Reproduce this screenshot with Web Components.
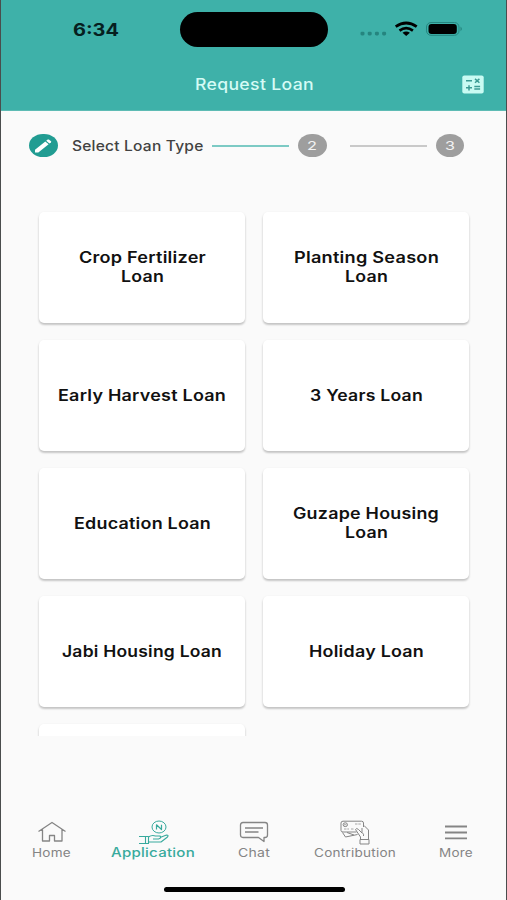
<!DOCTYPE html>
<html lang="en">
<head>
<meta charset="utf-8">
<title>Request Loan</title>
<style>
  html, body { margin: 0; height: 100%; }
  body {
    background: #fafafa;
    font-family: Inter, "Liberation Sans", sans-serif;
    overflow: hidden;
  }
</style>
</head>
<body>
<loan-app></loan-app>

<script>
// Text stretched horizontally to a given width
class WideText extends HTMLElement {
  constructor() {
    super();
    this.attachShadow({ mode: 'open' });
    this.shadowRoot.innerHTML = `
      <style>
        :host { display: block; white-space: nowrap; }
        span { display: inline-block; transform-origin: 0 50%; }
      </style>
      <span><slot></slot></span>
    `;
  }

  connectedCallback() {
    const width = Number(this.getAttribute('width'));
    const span = this.shadowRoot.querySelector('span');
    this.style.width = width + 'px';
    const natural = span.getBoundingClientRect().width;
    if (natural > 0) {
      span.style.transform = `scaleX(${width / natural})`;
    }
  }
}

class StatusBar extends HTMLElement {
  constructor() {
    super();
    this.attachShadow({ mode: 'open' });
    this.shadowRoot.innerHTML = `
      <style>
        :host {
          display: grid;
          grid-template-columns: 179px 148px 1fr;
          align-items: center;
          height: 59px;
          color: #06201f;
        }
        wide-text { margin-left: 72px; font-size: 17px; font-weight: 700; line-height: 20px; }
        .island { height: 35px; border-radius: 18px; background: #000; }
        svg { display: block; margin-left: 30px; }
      </style>
      <wide-text width="46">6:34</wide-text>
      <div class="island"></div>
      <svg width="106" height="20" viewBox="358 20 106 20">
        <g fill="#25857f">
          <rect x="360.500" y="31.800" width="4" height="3.600" rx="1.300"/><rect x="367.700" y="31.800" width="4" height="3.600" rx="1.300"/>
          <rect x="374.900" y="31.800" width="4" height="3.600" rx="1.300"/><rect x="382.100" y="31.800" width="4" height="3.600" rx="1.300"/>
        </g>
        <g fill="none" stroke="#000" stroke-width="2.700">
          <path d="M395.700 26.700Q406.200 19.300 416.700 26.700"/>
          <path d="M399.500 30.600Q406.200 25.600 412.900 30.600"/>
        </g>
        <path d="M402.500 32.800Q406.200 30.300 409.900 32.800L406.200 36Z" fill="#000"/>
        <rect x="426.500" y="22.500" width="32.500" height="12.800" rx="4.500" fill="none" stroke="#25857f"/>
        <rect x="428.500" y="24" width="28.300" height="9.900" rx="3" fill="#000"/>
        <path d="M460.500 26.500Q463.300 28.900 460.500 31.300Z" fill="#25857f"/>
      </svg>
    `;
  }
}

class AppHeader extends HTMLElement {
  constructor() {
    super();
    this.attachShadow({ mode: 'open' });
    this.shadowRoot.innerHTML = `
      <style>
        :host { display: block; height: 111px; box-sizing: border-box; background: #3eb1a9; border-bottom: 1px solid #5dbbb4; }
        .bar { display: grid; grid-template-columns: 193.500px 1fr 44px; align-items: center; height: 51px; }
        wide-text { grid-column: 2; font-size: 15.500px; font-weight: 450; letter-spacing: .3px; line-height: 20px; color: #d5fbf5; }
        svg { display: block; margin: -1px 0 0 -.500px; }
      </style>
      <status-bar></status-bar>
      <div class="bar">
        <wide-text width="119"><slot></slot></wide-text>
        <svg width="22" height="19" viewBox="0 0 22 19">
          <rect x=".3" y=".4" width="21.400" height="18" rx="2" fill="#c9fbf3"/>
          <g stroke="#3b9b94" stroke-width="1.500">
            <path d="M4 5.800h6M13 3.900l4.400 3.800M17.400 3.900L13 7.700M4 12.800h6M7 10.200v5.200M12.300 11.600h5.800M12.300 14h5.800"/>
          </g>
        </svg>
      </div>
    `;
  }
}

class LoanSteps extends HTMLElement {
  constructor() {
    super();
    this.attachShadow({ mode: 'open' });
    this.shadowRoot.innerHTML = `
      <style>
        :host { display: flex; align-items: center; height: 24px; padding: 22.500px 0 0 28px; }
        .dot {
          display: flex;
          align-items: center;
          justify-content: center;
          flex: none;
          width: 28.500px;
          height: 23.500px;
          border-radius: 50%;
          background: #9e9e9e;
          color: #f2f2f2;
          font-size: 12px;
        }
        .active { background: #219c92; }
        .title { margin: 0 8.500px 0 14.500px; font-size: 14.200px; font-weight: 500; letter-spacing: .2px; line-height: 18px; color: #424242; }
        .line { width: 77px; height: 2px; margin-right: 9px; background: #c9c9c9; }
        .done { background: #7ccac4; }
        .next { margin-left: 23px; }
      </style>
      <div class="dot active">
        <svg width="18" height="16" viewBox="0 0 18 16" fill="#fff">
          <path d="M1 14.400V11.700L11.300 3.500L14.600 6.200L4.300 14.400Z"/>
          <path d="M12.200 2.800L13.700 1.600Q14.300 1.200 14.900 1.600L17 3.300Q17.500 3.800 17 4.300L15.500 5.500Z"/>
        </svg>
      </div>
      <wide-text class="title" width="131.5">Select Loan Type</wide-text>
      <div class="line done"></div>
      <div class="dot"><wide-text width="10">2</wide-text></div>
      <div class="line next"></div>
      <div class="dot"><wide-text width="10">3</wide-text></div>
    `;
  }
}

class LoanCard extends HTMLElement {
  constructor() {
    super();
    this.attachShadow({ mode: 'open' });
    this.shadowRoot.innerHTML = `
      <style>
        :host {
          display: flex;
          flex-direction: column;
          align-items: center;
          justify-content: center;
          height: 111.500px;
          box-sizing: border-box;
          padding-top: 1px;
          border-radius: 5px;
          background: #fff;
          box-shadow: 0 2px 2px rgba(0, 0, 0, .17), 0 1px 3px rgba(0, 0, 0, .09);
          font-size: 15.500px;
          font-weight: 630;
          letter-spacing: .200px;
          line-height: 18.500px;
          color: #111;
        }
      </style>
      <slot></slot>
    `;
  }
}

class LoanGrid extends HTMLElement {
  constructor() {
    super();
    this.attachShadow({ mode: 'open' });
    this.shadowRoot.innerHTML = `
      <style>
        :host {
          display: grid;
          grid-template-columns: 206px 206px;
          grid-auto-rows: 112px;
          gap: 16px 18px;
          height: 525px;
          box-sizing: border-box;
          margin-top: 53.500px;
          padding: .500px 0 0 38px;
          overflow: hidden;
        }
      </style>
      <slot></slot>
    `;
  }
}

const NAV_ICONS = {
  home: `<path d="M1.500 11.500L15 2.500L28.500 11.500M5.500 9.500V21H12.500V15.500H17.500V21H25V9.500" stroke-width="1.300"/>`,
  application: `
    <ellipse cx="21" cy="7" rx="7" ry="6"/>
    <path d="M18.500 9.500V4.800L23.500 9.500V4.800" stroke-width="1.200"/>
    <path d="M1 16.500H10.500V23.500H1M7.500 16.500V23.500M10.500 17Q14 14.500 17.500 16H22Q24 18 20.500 19H15M22 17.500L28.500 15Q31 15 29.500 17L23 22H10.500" stroke-width="1.100"/>`,
  chat: `<path d="M4 2.500H26Q28.500 2.500 28.500 5V15Q28.500 17.500 26 17.500H25V21.500L19.500 17.500H4Q1.500 17.500 1.500 15V5Q1.500 2.500 4 2.500ZM6 8H24M6 12H19.500" stroke-width="1.300"/>`,
  contribution: `
    <path d="M23.500 7V3Q23.500 1.200 21.500 1.200H3Q1 1.200 1 3V10.500Q1 12 3 12H16.500M2.500 12.500L5.500 17L17.500 14.500M7 12.500L14 15"/>
    <ellipse cx="5.300" cy="4.700" rx="2.200" ry="1.900"/>
    <path d="M4 4.700H6.500M15 4H21.500M4 9H9M11 9H14" stroke-dasharray="2.500 .8" stroke-opacity=".7"/>
    <path d="M24 5.500L28.500 10V19.500H20.500V17L15.500 9.500Q16.500 7.500 18.500 9.500L22 13V8M20 19.500H29V24H20ZM22.500 13Q24 14 23.500 16"/>`,
  more: `<path d="M4 6.500H26M4 12.500H26M4 18.300H26" stroke-width="1.800"/>`
};

class NavItem extends HTMLElement {
  constructor() {
    super();
    this.attachShadow({ mode: 'open' });
  }

  connectedCallback() {
    const icon = this.getAttribute('icon');
    const width = this.getAttribute('label-width');
    this.shadowRoot.innerHTML = `
      <style>
        :host {
          display: flex;
          flex-direction: column;
          align-items: center;
          font-size: 11.500px;
          letter-spacing: .2px;
          line-height: 17px;
          color: #858585;
        }
        :host([active]) { color: #38aa9d; font-size: 12.500px; font-weight: 500; line-height: 16px; }
        svg { display: block; margin-left: 2px; }
      </style>
      <svg width="31" height="25" viewBox="0 0 31 25" fill="none" stroke="currentColor" stroke-width="1" stroke-linejoin="round">${NAV_ICONS[icon]}</svg>
      <wide-text width="${width}"><slot></slot></wide-text>
    `;
  }
}

class BottomNav extends HTMLElement {
  constructor() {
    super();
    this.attachShadow({ mode: 'open' });
    this.shadowRoot.innerHTML = `
      <style>
        :host { display: block; margin-top: 84px; }
        nav { display: grid; grid-template-columns: repeat(5, 101px); }
        .indicator { width: 181px; height: 5px; margin: 25px 0 0 162.500px; border-radius: 3px; background: #000; }
      </style>
      <nav><slot></slot></nav>
      <div class="indicator"></div>
    `;
  }
}

class LoanApp extends HTMLElement {
  constructor() {
    super();
    this.attachShadow({ mode: 'open' });
    this.shadowRoot.innerHTML = `
      <style>
        :host {
          display: block;
          width: 507px;
          height: 900px;
          box-sizing: border-box;
          border: solid #4a4d4d;
          border-width: 0 1px;
          background: #fafafa;
          overflow: hidden;
        }
      </style>
      <app-header>Request Loan</app-header>
      <loan-steps></loan-steps>
      <loan-grid>
        <loan-card><wide-text width="127">Crop Fertilizer</wide-text><wide-text width="43">Loan</wide-text></loan-card>
        <loan-card><wide-text width="145">Planting Season</wide-text><wide-text width="43">Loan</wide-text></loan-card>
        <loan-card><wide-text width="168">Early Harvest Loan</wide-text></loan-card>
        <loan-card><wide-text width="113">3 Years Loan</wide-text></loan-card>
        <loan-card><wide-text width="137">Education Loan</wide-text></loan-card>
        <loan-card><wide-text width="146">Guzape Housing</wide-text><wide-text width="43">Loan</wide-text></loan-card>
        <loan-card><wide-text width="160">Jabi Housing Loan</wide-text></loan-card>
        <loan-card><wide-text width="115">Holiday Loan</wide-text></loan-card>
        <loan-card></loan-card>
      </loan-grid>
      <bottom-nav>
        <nav-item icon="home" label-width="39">Home</nav-item>
        <nav-item icon="application" label-width="84" active>Application</nav-item>
        <nav-item icon="chat" label-width="32">Chat</nav-item>
        <nav-item icon="contribution" label-width="82">Contribution</nav-item>
        <nav-item icon="more" label-width="34">More</nav-item>
      </bottom-nav>
    `;
  }
}

customElements.define('wide-text', WideText);
customElements.define('status-bar', StatusBar);
customElements.define('app-header', AppHeader);
customElements.define('loan-steps', LoanSteps);
customElements.define('loan-card', LoanCard);
customElements.define('loan-grid', LoanGrid);
customElements.define('nav-item', NavItem);
customElements.define('bottom-nav', BottomNav);
customElements.define('loan-app', LoanApp);
</script>
</body>
</html>
